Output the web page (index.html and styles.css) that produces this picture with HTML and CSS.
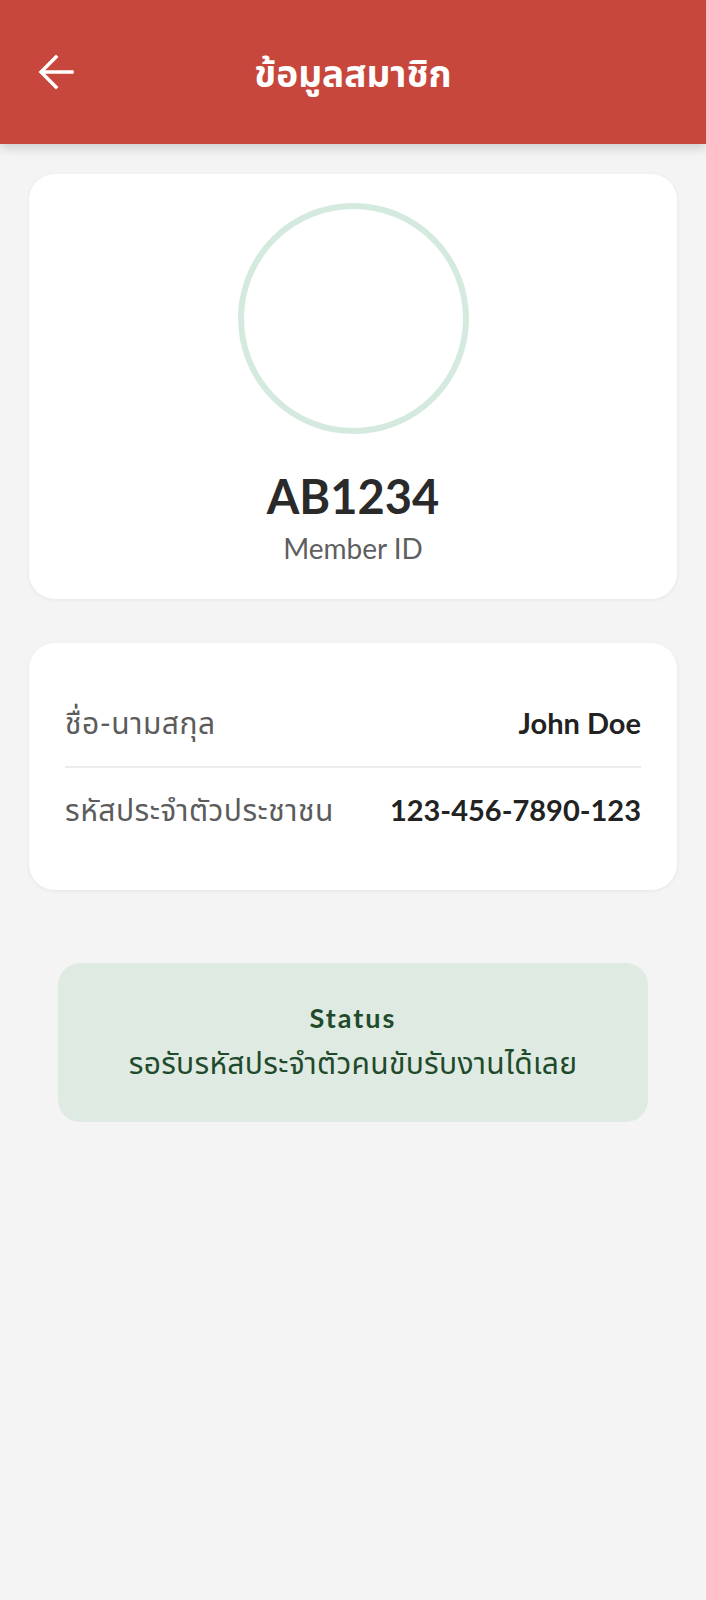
FILE: index.html
```html
<!DOCTYPE html>
<html lang="th">
<head>
<meta charset="utf-8">
<title>ข้อมูลสมาชิก</title>
<link rel="stylesheet" href="styles.css">
</head>
<body>
<header class="appbar">
  <button class="back" aria-label="back">
    <svg width="36" height="36" viewBox="0 0 36 36" fill="none" stroke="#fff" stroke-width="3.4" stroke-linecap="square">
      <path d="M34 18H4"/>
      <path d="M18 3L3 18l15 15"/>
    </svg>
  </button>
  <h1 class="title">ข้อมูลสมาชิก</h1>
</header>
<main class="content">
  <section class="card profile">
    <div class="avatar"></div>
    <div class="member-id">AB1234</div>
    <div class="member-label">Member ID</div>
  </section>
  <section class="card info">
    <div class="row">
      <span class="label">ชื่อ-นามสกุล</span>
      <span class="value">John Doe</span>
    </div>
    <div class="divider"></div>
    <div class="row">
      <span class="label">รหัสประจำตัวประชาชน</span>
      <span class="value">123-456-7890-123</span>
    </div>
  </section>
  <section class="status">
    <div class="status-title">Status</div>
    <div class="status-text">รอรับรหัสประจำตัวคนขับรับงานได้เลย</div>
  </section>
</main>
</body>
</html>
```

FILE: styles.css
```css
* { box-sizing: border-box; }
html, body {
  margin: 0;
  padding: 0;
  background: #f4f4f4;
  font-family: "Lato", "Noto Sans Thai", "Noto Sans", "DejaVu Sans", sans-serif;
  min-height: 1600px;
}
.appbar {
  height: 144px;
  background: #c8473d;
  display: flex;
  align-items: center;
  justify-content: center;
  position: relative;
  box-shadow: 0 4px 10px rgba(0,0,0,0.16);
}
.back {
  position: absolute;
  left: 38px;
  top: 54px;
  width: 36px;
  height: 36px;
  padding: 0;
  border: 0;
  background: none;
  display: flex;
}
.title {
  margin: 0;
  color: #fff;
  font-size: 37px;
  font-weight: 700;
  line-height: 1;
}
.content {
  padding: 30px 29px;
  display: flex;
  flex-direction: column;
}
.card {
  background: #fff;
  border-radius: 26px;
  box-shadow: 0 1px 4px rgba(0,0,0,0.06);
}
.profile {
  height: 425px;
  display: flex;
  flex-direction: column;
  align-items: center;
  padding-top: 29px;
}
.avatar {
  width: 231px;
  height: 231px;
  border-radius: 50%;
  border: 6px solid #d4eadf;
}
.member-id {
  margin-top: 34px;
  font-size: 47px;
  font-weight: 700;
  color: #2a2a2a;
  line-height: 1.2;
}
.member-label {
  margin-top: 8px;
  font-size: 28px;
  color: #5f5f5f;
  line-height: 1.2;
}
.info {
  margin-top: 44px;
  height: 247px;
  padding: 59px 36px 0 36px;
}
.row {
  display: flex;
  justify-content: space-between;
  align-items: baseline;
  height: 44px;
}
.label {
  font-size: 30px;
  letter-spacing: 0.5px;
  color: #5c5c5c;
}
.value {
  font-size: 29px;
  font-weight: 700;
  color: #222;
}
.divider {
  height: 2px;
  background: #ececec;
  margin: 20px 0 21px;
}
.status {
  margin: 73px 29px 0;
  height: 159px;
  background: #dfebe2;
  border-radius: 22px;
  display: flex;
  flex-direction: column;
  align-items: center;
  justify-content: center;
  color: #1f4a2b;
}
.status-title {
  font-size: 27px;
  font-weight: 700;
  letter-spacing: 2px;
  line-height: 1.3;
  margin-bottom: 4px;
}
.status-text {
  font-size: 30px;
  letter-spacing: 0.3px;
  line-height: 1.5;
}
```
